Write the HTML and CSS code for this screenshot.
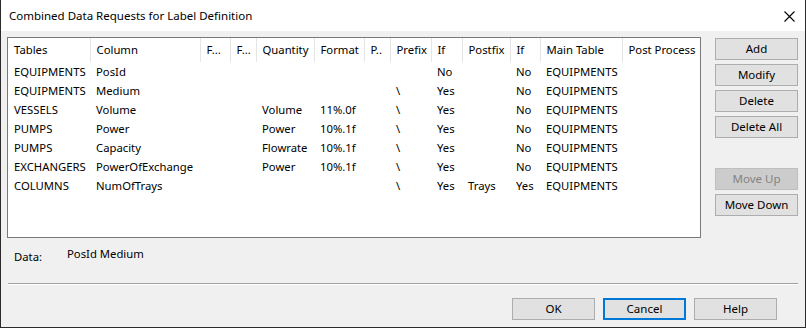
FILE: index.html
```html
<!DOCTYPE html>
<html lang="en">

<head>
  <meta charset="UTF-8" />
  <title>Combined Data Requests for Label Definition</title>
  <link rel="stylesheet" href="styles.css">
</head>

<body>
  <div class="window">
    <div class="titlebar">
      <span class="title">Combined Data Requests for Label Definition</span>
      <span class="close">
        <svg width="11" height="11" viewBox="0 0 11 11">
          <path d="M0.5 0.5 L10.5 10.5 M10.5 0.5 L0.5 10.5" stroke="#000" stroke-width="1.1" fill="none" />
        </svg>
      </span>
    </div>

    <div class="client">
      <div class="top">
        <div class="listbox">
          <table class="grid">
            <colgroup>
              <col style="width: 82px">
              <col style="width: 110px">
              <col style="width: 30px">
              <col style="width: 26px">
              <col style="width: 58px">
              <col style="width: 50px">
              <col style="width: 26px">
              <col style="width: 41px">
              <col style="width: 31px">
              <col style="width: 48px">
              <col style="width: 30px">
              <col style="width: 82px">
              <col style="width: 78px">
            </colgroup>
            <thead>
              <tr>
                <th>Tables</th>
                <th>Column</th>
                <th>F...</th>
                <th>F...</th>
                <th>Quantity</th>
                <th>Format</th>
                <th>P..</th>
                <th>Prefix</th>
                <th>If</th>
                <th>Postfix</th>
                <th>If</th>
                <th>Main Table</th>
                <th class="last">Post Process</th>
              </tr>
            </thead>
            <tbody>
              <tr>
                <td>EQUIPMENTS</td><td>PosId</td><td></td><td></td><td></td><td></td><td></td>
                <td></td><td>No</td><td></td><td>No</td><td>EQUIPMENTS</td><td></td>
              </tr>
              <tr>
                <td>EQUIPMENTS</td><td>Medium</td><td></td><td></td><td></td><td></td><td></td>
                <td>\</td><td>Yes</td><td></td><td>No</td><td>EQUIPMENTS</td><td></td>
              </tr>
              <tr>
                <td>VESSELS</td><td>Volume</td><td></td><td></td><td>Volume</td><td>11%.0f</td><td></td>
                <td>\</td><td>Yes</td><td></td><td>No</td><td>EQUIPMENTS</td><td></td>
              </tr>
              <tr>
                <td>PUMPS</td><td>Power</td><td></td><td></td><td>Power</td><td>10%.1f</td><td></td>
                <td>\</td><td>Yes</td><td></td><td>No</td><td>EQUIPMENTS</td><td></td>
              </tr>
              <tr>
                <td>PUMPS</td><td>Capacity</td><td></td><td></td><td>Flowrate</td><td>10%.1f</td><td></td>
                <td>\</td><td>Yes</td><td></td><td>No</td><td>EQUIPMENTS</td><td></td>
              </tr>
              <tr>
                <td>EXCHANGERS</td><td>PowerOfExchange</td><td></td><td></td><td>Power</td><td>10%.1f</td><td></td>
                <td>\</td><td>Yes</td><td></td><td>No</td><td>EQUIPMENTS</td><td></td>
              </tr>
              <tr>
                <td>COLUMNS</td><td>NumOfTrays</td><td></td><td></td><td></td><td></td><td></td>
                <td>\</td><td>Yes</td><td>Trays</td><td>Yes</td><td>EQUIPMENTS</td><td></td>
              </tr>
            </tbody>
          </table>
        </div>

        <div class="side-buttons">
          <button class="btn">Add</button>
          <button class="btn">Modify</button>
          <button class="btn">Delete</button>
          <button class="btn">Delete All</button>
          <button class="btn spaced" disabled>Move Up</button>
          <button class="btn">Move Down</button>
        </div>
      </div>

      <div class="data-row">
        <span class="data-label">Data:</span>
        <span class="data-value">PosId Medium</span>
      </div>

      <div class="separator"></div>

      <div class="footer">
        <button class="btn">OK</button>
        <button class="btn default">Cancel</button>
        <button class="btn">Help</button>
      </div>
    </div>
  </div>
</body>

</html>
```

FILE: styles.css
```css
* {
  box-sizing: border-box;
  margin: 0;
  padding: 0;
}

body {
  background: #f0f0f0;
  font-family: 'Noto Sans', 'Open Sans', sans-serif;
  font-size: 11.3px;
  color: #000;
}

.window {
  width: 806px;
  height: 328px;
  display: flex;
  flex-direction: column;
  background: #f0f0f0;
  border: 1px solid #2b2b2b;
  border-top: none;
}

/* title bar */
.titlebar {
  height: 31px;
  background: #fff;
  display: flex;
  align-items: center;
  justify-content: space-between;
  padding-left: 8px;
  padding-right: 10px;
}

.title {
  font-size: 11.5px;
  line-height: 16px;
  margin-top: 1px;
}

.close {
  display: flex;
  align-items: center;
  margin-top: 1px;
}

/* client area */
.client {
  flex: 1;
  display: flex;
  flex-direction: column;
  padding: 6px 7px 0 6px;
}

.top {
  display: flex;
  gap: 14px;
}

.listbox {
  width: 694px;
  height: 201px;
  background: #fff;
  border: 1px solid #7a7a7a;
  overflow: hidden;
}

.grid {
  border-collapse: collapse;
  table-layout: fixed;
  width: 692px;
}

.grid th {
  height: 24px;
  font-weight: normal;
  text-align: left;
  padding: 0 0 0 6px;
  border-right: 1px solid #e5e5e5;
  white-space: nowrap;
  overflow: hidden;
  line-height: 16px;
}

.grid th.last {
  border-right: none;
}

.grid td {
  height: 19px;
  padding: 1px 0 0 6px;
  white-space: nowrap;
  overflow: hidden;
  line-height: 16px;
}

/* buttons */
.btn {
  height: 22px;
  width: 83px;
  font-family: inherit;
  font-size: 11.5px;
  color: #000;
  background: #e1e1e1;
  border: 1px solid #adadad;
  line-height: 16px;
  padding: 0;
}

.btn:disabled {
  background: #cccccc;
  border-color: #bfbfbf;
  color: #838383;
}

.btn.default {
  border: 2px solid #0078d7;
}

.side-buttons {
  display: flex;
  flex-direction: column;
  gap: 4px;
  margin-top: 1px;
}

.side-buttons .spaced {
  margin-top: 26px;
}

/* data line */
.data-row {
  display: flex;
  margin-top: 8px;
  padding-left: 7px;
  line-height: 16px;
}

.data-label {
  width: 53px;
  padding-top: 3px;
}

.separator {
  margin-top: 18px;
  margin-left: 1px;
  height: 2px;
  border-top: 1px solid #a0a0a0;
  border-bottom: 1px solid #fff;
}

.footer {
  display: flex;
  justify-content: flex-end;
  gap: 8px;
  margin-top: 13px;
  padding-right: 21px;
}
```
